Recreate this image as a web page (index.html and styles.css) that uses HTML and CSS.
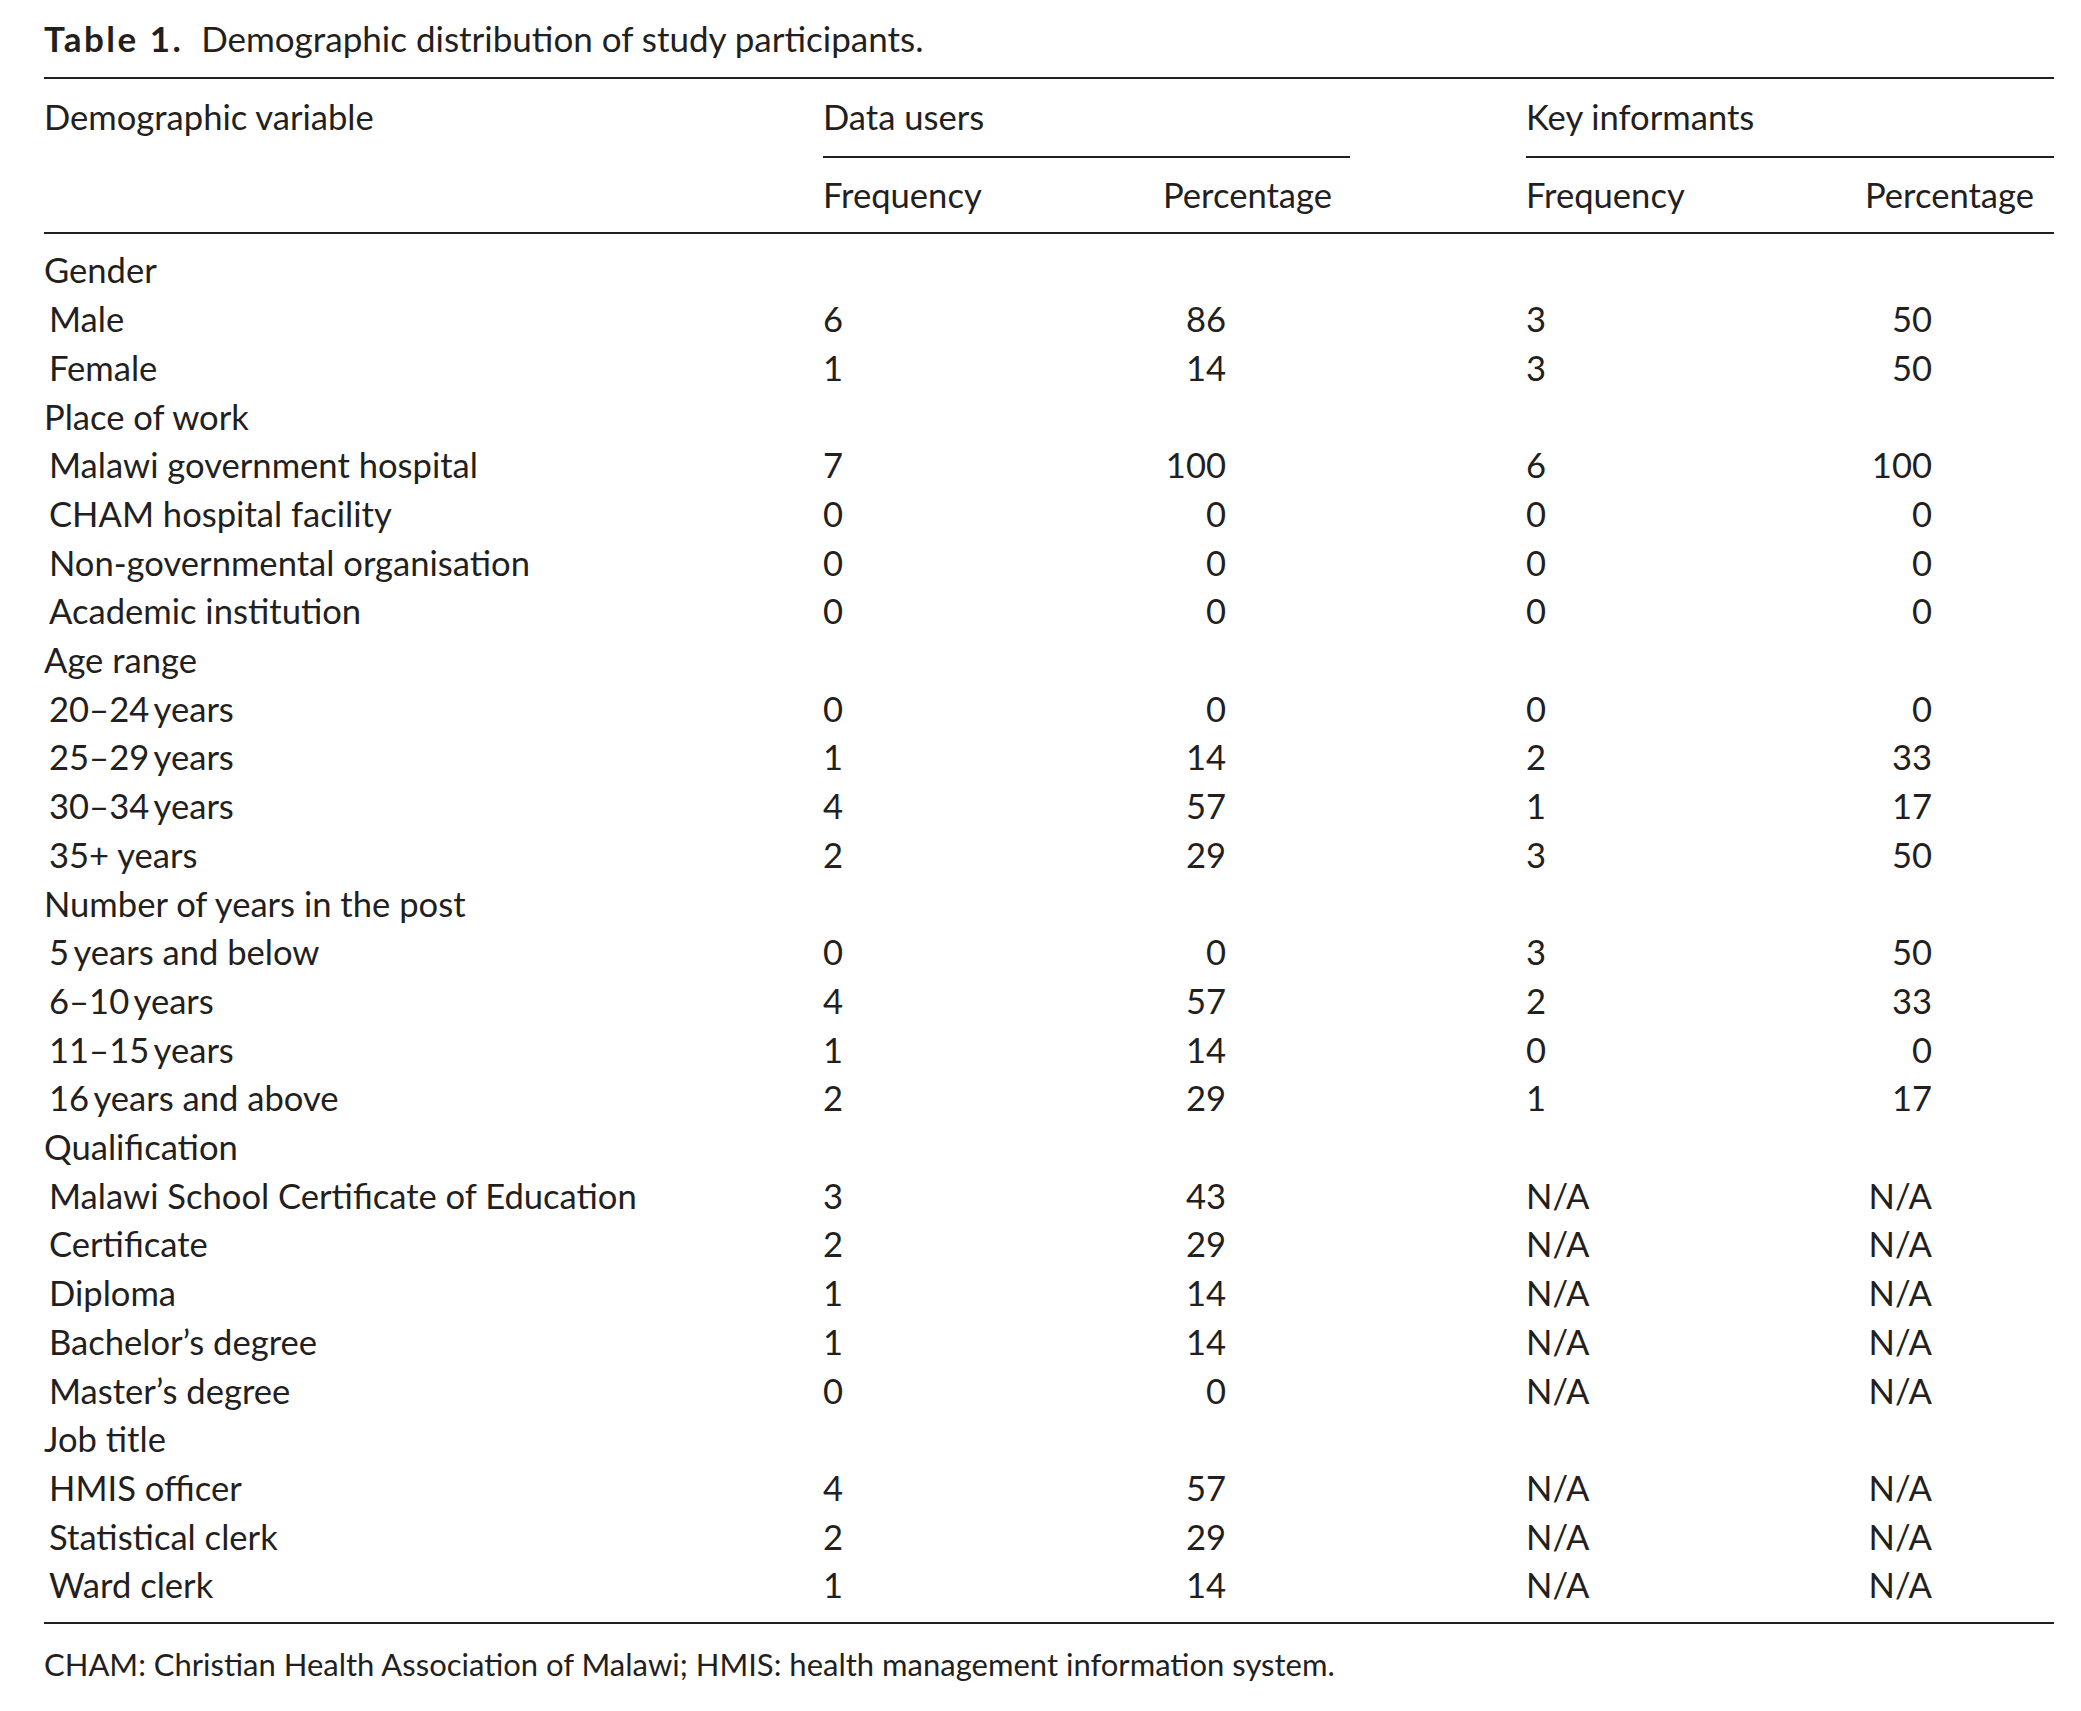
FILE: index.html
```html
<!DOCTYPE html>
<html lang="en">
<head>
<meta charset="utf-8">
<title>Table 1. Demographic distribution of study participants.</title>
<link rel="stylesheet" href="styles.css">
</head>
<body>
<div class="page">
  <p class="caption"><span class="label">Table 1.</span> Demographic distribution of study participants.</p>
  <table class="data">
    <colgroup>
      <col class="c-var">
      <col class="c-num">
      <col class="c-pct">
      <col class="c-gap">
      <col class="c-num">
      <col class="c-pct2">
    </colgroup>
    <thead>
      <tr class="h1">
        <th class="var">Demographic variable</th>
        <th class="grp" colspan="2">Data users</th>
        <th class="gap"></th>
        <th class="grp" colspan="2">Key informants</th>
      </tr>
      <tr class="h2">
        <th class="var"></th>
        <th class="freq">Frequency</th>
        <th class="pct">Percentage</th>
        <th class="gap"></th>
        <th class="freq">Frequency</th>
        <th class="pct pct-k">Percentage</th>
      </tr>
    </thead>
    <tbody>
      <tr class="cat first"><td>Gender</td><td></td><td></td><td></td><td></td><td></td></tr>
      <tr><td class="item">Male</td><td class="f">6</td><td class="p">86</td><td></td><td class="f">3</td><td class="p pk">50</td></tr>
      <tr><td class="item">Female</td><td class="f">1</td><td class="p">14</td><td></td><td class="f">3</td><td class="p pk">50</td></tr>
      <tr class="cat"><td>Place of work</td><td></td><td></td><td></td><td></td><td></td></tr>
      <tr><td class="item">Malawi government hospital</td><td class="f">7</td><td class="p">100</td><td></td><td class="f">6</td><td class="p pk">100</td></tr>
      <tr><td class="item">CHAM hospital facility</td><td class="f">0</td><td class="p">0</td><td></td><td class="f">0</td><td class="p pk">0</td></tr>
      <tr><td class="item">Non-governmental organisation</td><td class="f">0</td><td class="p">0</td><td></td><td class="f">0</td><td class="p pk">0</td></tr>
      <tr><td class="item">Academic institution</td><td class="f">0</td><td class="p">0</td><td></td><td class="f">0</td><td class="p pk">0</td></tr>
      <tr class="cat"><td>Age range</td><td></td><td></td><td></td><td></td><td></td></tr>
      <tr><td class="item">20–24&#8201;years</td><td class="f">0</td><td class="p">0</td><td></td><td class="f">0</td><td class="p pk">0</td></tr>
      <tr><td class="item">25–29&#8201;years</td><td class="f">1</td><td class="p">14</td><td></td><td class="f">2</td><td class="p pk">33</td></tr>
      <tr><td class="item">30–34&#8201;years</td><td class="f">4</td><td class="p">57</td><td></td><td class="f">1</td><td class="p pk">17</td></tr>
      <tr><td class="item">35+ years</td><td class="f">2</td><td class="p">29</td><td></td><td class="f">3</td><td class="p pk">50</td></tr>
      <tr class="cat"><td>Number of years in the post</td><td></td><td></td><td></td><td></td><td></td></tr>
      <tr><td class="item">5&#8201;years and below</td><td class="f">0</td><td class="p">0</td><td></td><td class="f">3</td><td class="p pk">50</td></tr>
      <tr><td class="item">6–10&#8201;years</td><td class="f">4</td><td class="p">57</td><td></td><td class="f">2</td><td class="p pk">33</td></tr>
      <tr><td class="item">11–15&#8201;years</td><td class="f">1</td><td class="p">14</td><td></td><td class="f">0</td><td class="p pk">0</td></tr>
      <tr><td class="item">16&#8201;years and above</td><td class="f">2</td><td class="p">29</td><td></td><td class="f">1</td><td class="p pk">17</td></tr>
      <tr class="cat"><td>Qualification</td><td></td><td></td><td></td><td></td><td></td></tr>
      <tr><td class="item">Malawi School Certificate of Education</td><td class="f">3</td><td class="p">43</td><td></td><td class="f">N/A</td><td class="p pk">N/A</td></tr>
      <tr><td class="item">Certificate</td><td class="f">2</td><td class="p">29</td><td></td><td class="f">N/A</td><td class="p pk">N/A</td></tr>
      <tr><td class="item">Diploma</td><td class="f">1</td><td class="p">14</td><td></td><td class="f">N/A</td><td class="p pk">N/A</td></tr>
      <tr><td class="item">Bachelor’s degree</td><td class="f">1</td><td class="p">14</td><td></td><td class="f">N/A</td><td class="p pk">N/A</td></tr>
      <tr><td class="item">Master’s degree</td><td class="f">0</td><td class="p">0</td><td></td><td class="f">N/A</td><td class="p pk">N/A</td></tr>
      <tr class="cat"><td>Job title</td><td></td><td></td><td></td><td></td><td></td></tr>
      <tr><td class="item">HMIS officer</td><td class="f">4</td><td class="p">57</td><td></td><td class="f">N/A</td><td class="p pk">N/A</td></tr>
      <tr><td class="item">Statistical clerk</td><td class="f">2</td><td class="p">29</td><td></td><td class="f">N/A</td><td class="p pk">N/A</td></tr>
      <tr class="last"><td class="item">Ward clerk</td><td class="f">1</td><td class="p">14</td><td></td><td class="f">N/A</td><td class="p pk">N/A</td></tr>
    </tbody>
  </table>
  <p class="note">CHAM: Christian Health Association of Malawi; HMIS: health management information system.</p>
</div>
</body>
</html>
```

FILE: styles.css
```css
html, body {
  margin: 0;
  padding: 0;
  background: #ffffff;
}

body {
  font-family: Lato, "Open Sans", "Liberation Sans", sans-serif;
  color: #231f20;
}

.page {
  padding: 14px 0 0 44px;
  width: 2010px;
}

.caption {
  margin: 0 0 15px 0;
  font-size: 35px;
  line-height: 48px;
  white-space: nowrap;
}

.caption .label {
  font-weight: 700;
  letter-spacing: 2.5px;
  margin-right: 9px;
}

.data {
  width: 2010px;
  table-layout: fixed;
  border-collapse: separate;
  border-spacing: 0;
  font-size: 34.6px;
  line-height: 48.7px;
}

.c-var { width: 779px; }
.c-num { width: 264px; }
.c-pct { width: 263px; }
.c-gap { width: 176px; }
.c-pct2 { width: 264px; }

.data th {
  font-weight: 400;
  text-align: left;
  vertical-align: top;
  padding: 14px 0;
  white-space: nowrap;
}

.data .h1 th {
  border-top: 2px solid #231f20;
  padding-bottom: 14px;
}

.data .h1 th.grp {
  border-bottom: 2px solid #231f20;
}

.data .h1 th.var,
.data .h1 th.gap {
  padding-bottom: 16px;
}

.data .h2 th {
  padding-top: 13px;
  padding-bottom: 13px;
  border-bottom: 2px solid #231f20;
}

.data .h2 th.pct {
  text-align: right;
  padding-right: 18px;
}

.data .h2 th.pct-k {
  padding-right: 20px;
}

.data td {
  padding: 0;
  white-space: nowrap;
  vertical-align: top;
}

.data td.item {
  padding-left: 5px;
}

.data td.f {
  text-align: left;
}

.data td.p {
  text-align: right;
  padding-right: 124px;
}

.data td.pk {
  padding-right: 122px;
}

.data tr.first td {
  padding-top: 12px;
}

.data tr.last td {
  padding-bottom: 12px;
  border-bottom: 2px solid #231f20;
}

.note {
  margin: 20px 0 0 0;
  font-size: 31px;
  line-height: 40px;
  white-space: nowrap;
}
```
